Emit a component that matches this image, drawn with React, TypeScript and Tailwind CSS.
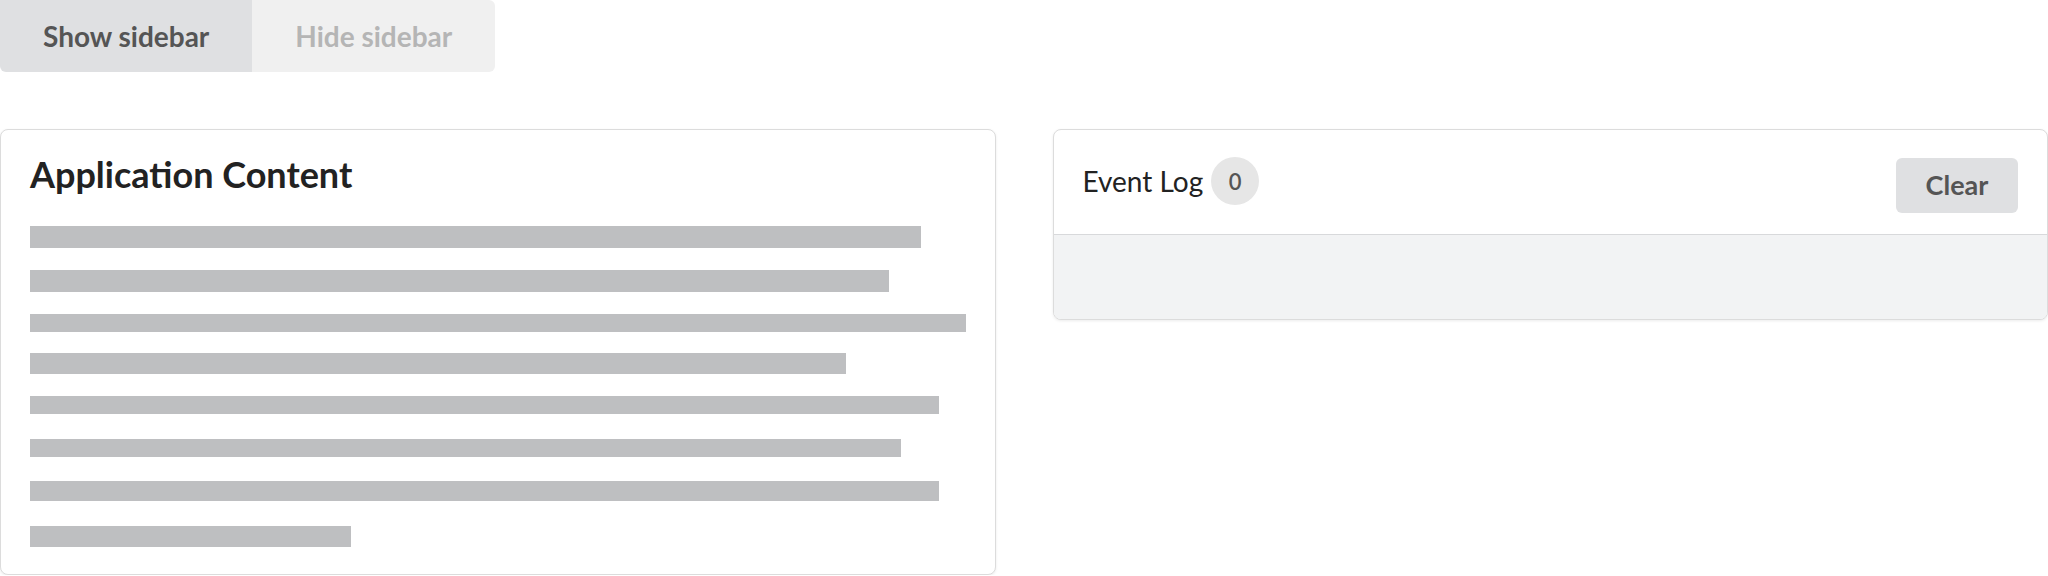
import React from "react";

const bars = [
  { w: "95.2%", h: "h-[22px]", mt: "mt-0" },
  { w: "91.8%", h: "h-[22px]", mt: "mt-[22px]" },
  { w: "100%", h: "h-[18px]", mt: "mt-[22px]" },
  { w: "87.2%", h: "h-[21px]", mt: "mt-[21px]" },
  { w: "97.2%", h: "h-[18px]", mt: "mt-[22px]" },
  { w: "93.1%", h: "h-[18px]", mt: "mt-[25px]" },
  { w: "97.2%", h: "h-[20px]", mt: "mt-[24px]" },
  { w: "34.3%", h: "h-[21px]", mt: "mt-[25px]" },
];

export default function App() {
  const events: string[] = [];

  return (
    <div className="w-[2048px] bg-white font-['Lato','Liberation_Sans',sans-serif]">
      {/* Sidebar toggle */}
      <div className="flex">
        <div className="flex overflow-hidden rounded-b-[6px] rounded-tr-[6px]">
          <button className="h-[72px] bg-[#dfe0e2] px-[43px] text-[28px] font-bold text-[#555555]">
            Show sidebar
          </button>
          <button disabled className="h-[72px] bg-[#f0f0f0] px-[43px] text-[28px] font-bold text-[#b5b5b5]">
            Hide sidebar
          </button>
        </div>
      </div>

      <div className="mt-[57px] grid grid-cols-2 items-start gap-[57px]">
        {/* Main content */}
        <div className="rounded-[8px] border border-[#dcdcdc] bg-white px-[29px] pt-[25px] pb-[27px] shadow-[0_1px_3px_rgba(0,0,0,0.08)]">
          <h2 className="text-[36px] leading-[38px] font-bold text-[#222222]">Application Content</h2>
          <div className="mt-[33px] flex flex-col">
            {bars.map((b, i) => (
              <div
                key={i}
                className={`${b.h} ${b.mt} bg-[#bebfc1]`}
                style={{ width: b.w }}
              />
            ))}
          </div>
        </div>

        {/* Event log */}
        <div className="overflow-hidden rounded-[8px] border border-[#dcdcdc] bg-white shadow-[0_1px_3px_rgba(0,0,0,0.08)]">
          <div className="flex items-start justify-between border-b border-[#d8d9db] px-[29px] pt-[27px] pb-[21px]">
            <div className="flex items-center gap-[8px]">
              <span className="text-[28px] text-[#222222]">Event Log</span>
              <span className="flex h-[48px] w-[48px] items-center justify-center rounded-full bg-[#e6e6e6] text-[22px] font-semibold text-[#555555]">
                {events.length}
              </span>
            </div>
            <button className="mt-[1px] h-[55px] w-[122px] rounded-[6px] bg-[#dfe0e2] text-[27px] font-bold text-[#555555]">
              Clear
            </button>
          </div>
          <div className="h-[84px] bg-[#f2f3f4]">
            {events.map((e, i) => (
              <div key={i}>{e}</div>
            ))}
          </div>
        </div>
      </div>
    </div>
  );
}
